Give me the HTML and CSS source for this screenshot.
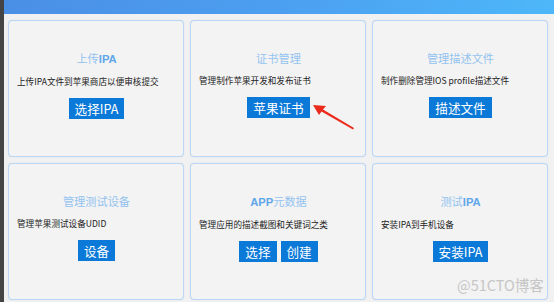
FILE: index.html
```html
<!DOCTYPE html>
<html>
<head>
    <meta charset="utf-8">
    <title>IPA 工具</title>
    <link rel="stylesheet" href="styles.css">
</head>
<body>
    <div class="side"></div>
    <div class="main">
        <div class="topbar"></div>

        <div class="grid">
            <div class="card">
                <div class="title">上传<b>IPA</b></div>
                <div class="desc">上传IPA文件到苹果商店以便审核提交</div>
                <div class="actions"><button class="btn">选择IPA</button></div>
            </div>

            <div class="card">
                <div class="title">证书管理</div>
                <div class="desc">管理制作苹果开发和发布证书</div>
                <div class="actions"><button class="btn">苹果证书</button></div>
            </div>

            <div class="card">
                <div class="title">管理描述文件</div>
                <div class="desc">制作删除管理IOS profile描述文件</div>
                <div class="actions"><button class="btn">描述文件</button></div>
            </div>

            <div class="card">
                <div class="title">管理测试设备</div>
                <div class="desc">管理苹果测试设备UDID</div>
                <div class="actions"><button class="btn">设备</button></div>
            </div>

            <div class="card">
                <div class="title"><b>APP</b>元数据</div>
                <div class="desc">管理应用的描述截图和关键词之类</div>
                <div class="actions">
                    <button class="btn">选择</button>
                    <button class="btn">创建</button>
                </div>
            </div>

            <div class="card">
                <div class="title">测试<b>IPA</b></div>
                <div class="desc">安装IPA到手机设备</div>
                <div class="actions"><button class="btn">安装IPA</button></div>
            </div>
        </div>
    </div>

    <!-- annotation arrow drawn over the screenshot -->
    <svg class="arrow" width="44" height="26" viewBox="0 0 44 26">
        <polygon points="0,1 13,2 10,5.5 41,24 40,25.5 8.5,7.5 6,11" fill="#ec2a1c"/>
    </svg>

    <div class="watermark">@51CTO博客</div>
</body>
</html>
```

FILE: styles.css
```css
body {
    margin: 0;
    width: 554px;
    height: 302px;
    display: flex;
    background-color: #f1f1f1;
    font-family: "Noto Sans CJK SC", "Noto Sans", sans-serif;
    overflow: hidden;
}

.side {
    width: 4px;
    flex-shrink: 0;
    background-color: #444444;
}

.main {
    flex: 1;
}

.topbar {
    height: 14px;
    background: linear-gradient(90deg, #4a8fe6 0%, #4c9ff0 50%, #4db7f9 100%);
}

.grid {
    display: grid;
    grid-template-columns: repeat(3, 176px);
    grid-template-rows: repeat(2, 137px);
    gap: 6px;
    padding: 6px 0 0 4px;
}

.card {
    background-color: #f3f3f3;
    border: 1px solid #bcd7f3;
    border-radius: 4px;
    box-shadow: 0 0 1px rgba(120, 170, 230, 0.4);
    padding: 29px 7px 0 8px;
}

.title {
    text-align: center;
    font-size: 11.2px;
    line-height: 16px;
    color: #93c3f0;
}

.title b {
    color: #5ea6ea;
    font-family: "Liberation Sans", Arial, sans-serif;
}

.desc {
    margin-top: 8px;
    font-size: 8.6px;
    line-height: 12px;
    color: #222222;
    white-space: nowrap;
}

.actions {
    margin-top: 11px;
    display: flex;
    justify-content: center;
    gap: 4px;
}

.btn {
    height: 21px;
    padding: 0 6px;
    border: none;
    border-radius: 0;
    background-color: #0a79d8;
    color: #ffffff;
    font-family: "Noto Sans CJK SC", "Noto Sans", sans-serif;
    font-size: 12.6px;
    line-height: 21px;
}

.arrow {
    position: absolute;
    left: 313px;
    top: 104px;
}

.watermark {
    position: absolute;
    left: 457px;
    top: 275px;
    font-size: 14.5px;
    line-height: 20px;
    color: #c6c6c6;
}
```
